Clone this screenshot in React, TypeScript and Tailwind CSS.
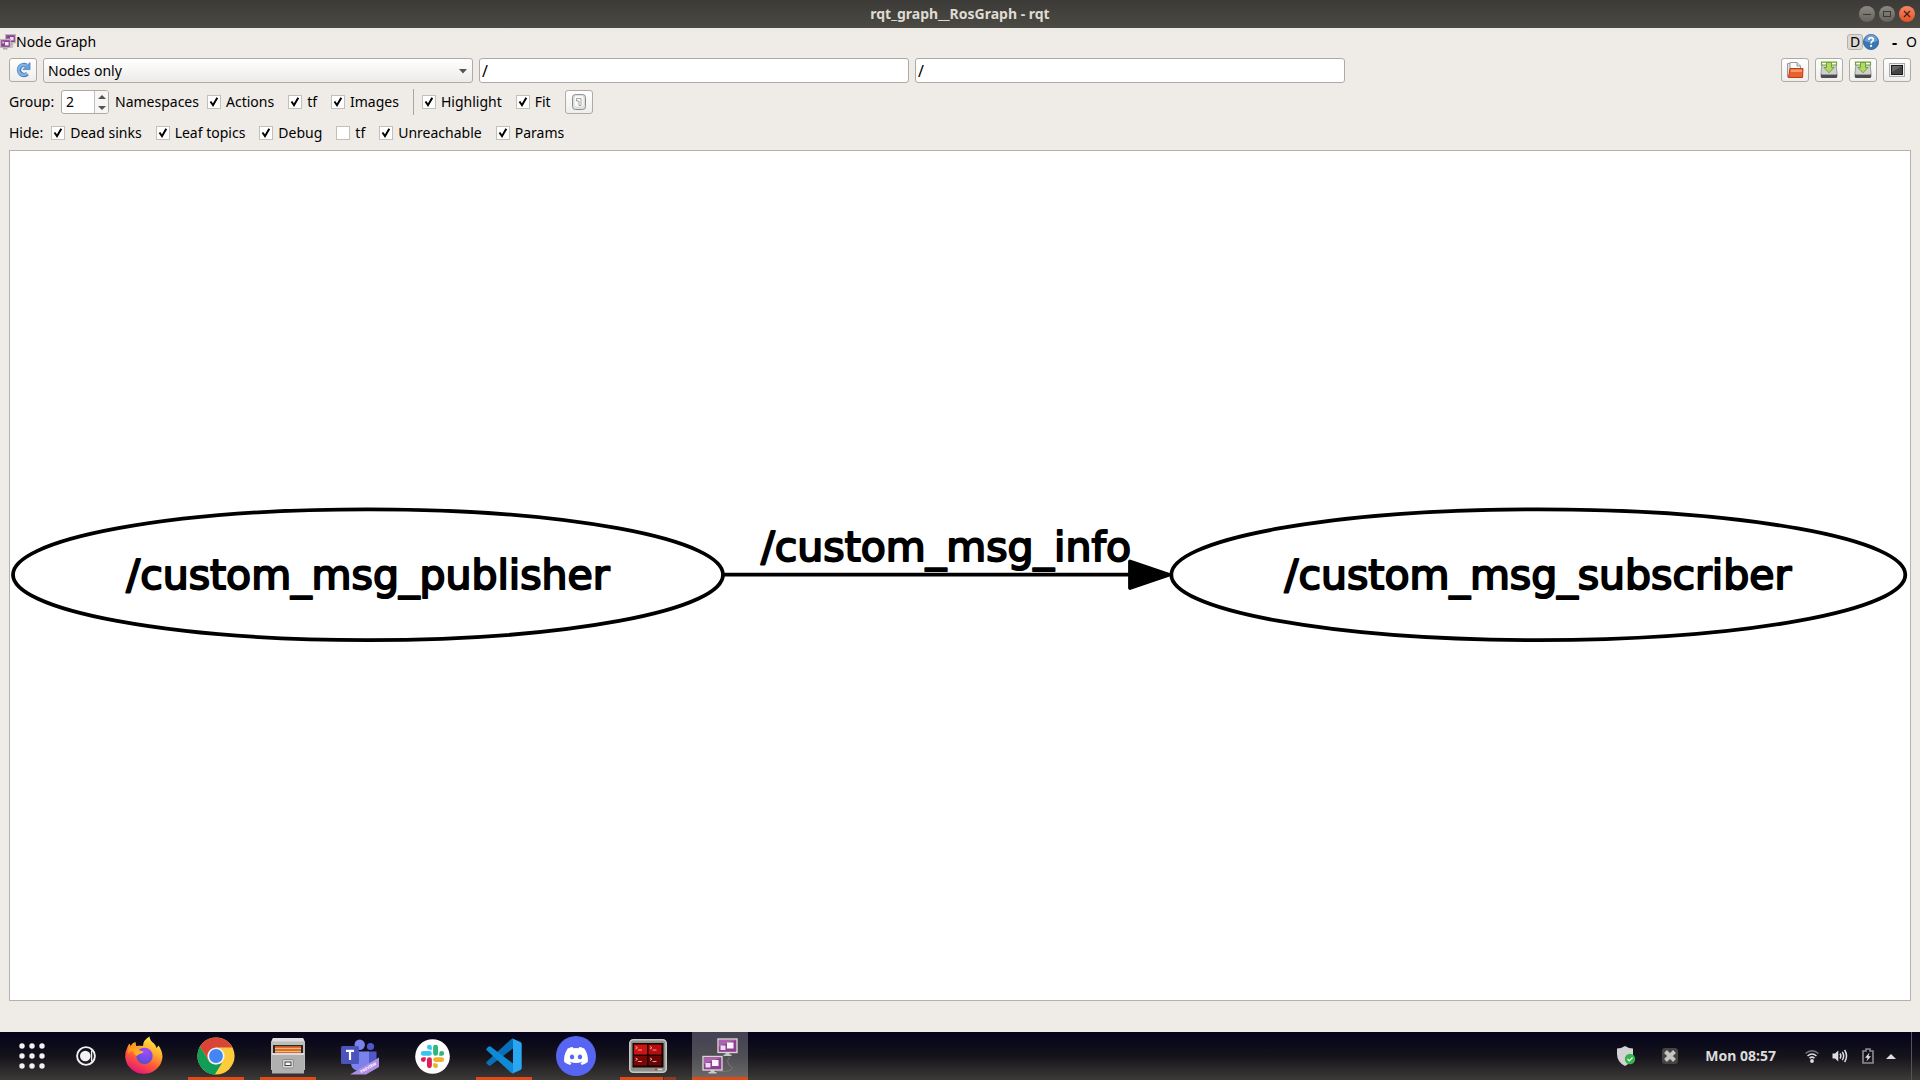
import type { ReactNode } from "react";
import { FaDiscord } from "react-icons/fa";

function Check({ label, checked = true }: { label: string; checked?: boolean }) {
  return (
    <label className="flex items-center gap-[5px]">
      <span className="grid size-3.5 place-items-center">
        <input
          type="checkbox"
          defaultChecked={checked}
          className="peer col-start-1 row-start-1 size-3.5 appearance-none border border-[#c3bfbb] bg-white"
        />
        <svg
          viewBox="0 0 14 14"
          className="pointer-events-none invisible col-start-1 row-start-1 size-3.5 peer-checked:visible"
          fill="none"
          stroke="#000"
          strokeWidth="2"
        >
          <path d="M3.5 6.5 L6 10.2 L10.3 2.8" />
        </svg>
      </span>
      <span>{label}</span>
    </label>
  );
}

function ToolButton({ label, children }: { label: string; children: ReactNode }) {
  return (
    <button
      type="button"
      aria-label={label}
      className="flex h-6 w-7 shrink-0 items-center justify-center rounded-[3px] border border-[#aeaaa6] bg-linear-to-b from-white to-[#efeeec]"
    >
      {children}
    </button>
  );
}

function FilterInput({ label }: { label: string }) {
  return (
    <div className="flex-1">
      <input
        type="text"
        aria-label={label}
        defaultValue="/"
        className="block h-[25px] w-full rounded-[3px] border border-[#aeaaa6] bg-white px-0.5 text-base"
      />
    </div>
  );
}

function RefreshIcon() {
  return (
    <svg viewBox="0 0 18 18" className="size-[18px]">
      <path d="M13.4 12.6 A5 5 0 1 1 12.4 4.6" fill="none" stroke="#4a83c0" strokeWidth="4.4" />
      <path d="M16 1.6 V8.6 H8.8 Z" fill="#6a9fd6" stroke="#4a83c0" strokeWidth="0.8" />
      <path d="M13 12.3 A4.9 4.9 0 1 1 12.4 5" fill="none" stroke="#86b3e2" strokeWidth="2.4" />
    </svg>
  );
}

function OpenIcon() {
  return (
    <svg viewBox="0 0 18 18" className="size-[18px]">
      <path d="M1.5 2.5 H8 L10 4.5 V16 H1.5 Z" fill="#e4e2e0" stroke="#999" />
      <path d="M4 1.5 H11 L14.5 5 V12 H4 Z" fill="#fafafa" stroke="#999" />
      <path d="M11 1.5 V5 H14.5" fill="#ddd" stroke="#999" />
      <path d="M4 7.5 H17 L16.5 16.5 H2.5 Z" fill="#e8622c" stroke="#c03a14" />
      <path d="M4.8 8.5 H16 V11 H4.5 Z" fill="#f59a6c" />
    </svg>
  );
}

function SaveIcon() {
  return (
    <svg viewBox="0 0 18 18" className="size-[18px]">
      <path d="M2 3 H16 L17 12 V16 H1 V12 Z" fill="#cfcfcf" stroke="#9a9a9a" />
      <path d="M1 13 H17 V16 Q17 17 16 17 H2 Q1 17 1 16 Z" fill="#4c4c4c" />
      <path d="M1.5 13.5 H16.5" stroke="#999" />
      <path d="M1.5 1.2 H16.5 V4 H1.5 Z" fill="#fff" stroke="#6fa32e" strokeWidth="1.2" />
      <path d="M6.5 1.5 H11.5 V6.5 H14 L9 11.8 L4 6.5 H6.5 Z" fill="#b3d86a" stroke="#6fa32e" />
    </svg>
  );
}

function ScreenIcon() {
  return (
    <svg viewBox="0 0 18 16" className="h-4 w-[18px]">
      <rect x="1.5" y="1.5" width="15" height="13" fill="#eee" stroke="#aaa" />
      <rect x="3.5" y="3.5" width="11" height="9" fill="#444" stroke="#1c1c1c" />
      <path d="M4 4 H14 L4 10 Z" fill="#666" />
    </svg>
  );
}

function FitIcon() {
  return (
    <svg viewBox="0 0 18 18" className="size-[18px]">
      <rect x="2.5" y="1.5" width="13" height="15" rx="3" fill="#e4e3e1" stroke="#8b8b8b" />
      <rect x="4" y="2.2" width="10" height="12" rx="2.5" fill="#f8f8f7" stroke="#c9c9c9" strokeWidth="0.6" />
      <path d="M6.5 5.5 H11 V12.5 H9 V8 H6.5 Z" fill="#fff" stroke="#999" strokeWidth="0.9" />
    </svg>
  );
}

function Monitor({ x, y }: { x: number; y: number }) {
  return (
    <g transform={`translate(${x} ${y})`}>
      <path d="M8 13 H12 V16 H14 V17.5 H6 V16 H8 Z" fill="#c9c9c9" />
      <rect x="0.5" y="0.5" width="19" height="13.5" fill="#8e3f93" stroke="#d5d5d2" strokeWidth="1.4" />
      <path d="M1.5 1.5 H18.5 L1.5 8 Z" fill="#a964ad" />
      <rect x="3" y="7" width="5" height="4.5" fill="#eadcf0" />
      <rect x="9.5" y="4" width="6.5" height="6" fill="#fbf7fc" />
    </g>
  );
}

function NodesIcon() {
  return (
    <svg viewBox="0 0 36 36" className="size-9">
      <path d="M28 19 Q24 22 27 27 Q34 31 26 33 Q20 34 14 33" fill="none" stroke="#777" strokeWidth="1" />
      <Monitor x={15.5} y={0.5} />
      <Monitor x={0.5} y={18} />
    </svg>
  );
}

function NodesIconSmall() {
  return (
    <svg viewBox="0 0 16 16" className="size-4">
      <path d="M12 8 V12.5 H8" fill="none" stroke="#c4c1bd" strokeWidth="2.5" />
      <path d="M8.5 9.5 H12.5 V11 H8.5 Z M3 13.5 H7.5 V15.5 H3 Z" fill="#a9a6a3" />
      <rect x="5.6" y="0.6" width="9.8" height="8" fill="#8e3f93" stroke="#b9b6b3" strokeWidth="1.2" />
      <rect x="10" y="3" width="3.6" height="3.4" fill="#eadcf0" />
      <rect x="7.2" y="4.5" width="2" height="2" fill="#d9b9dc" />
      <rect x="0.6" y="5.6" width="9.8" height="7.8" fill="#8e3f93" stroke="#b9b6b3" strokeWidth="1.2" />
      <rect x="5" y="8" width="3.6" height="3.4" fill="#f3e9f5" />
      <rect x="2.2" y="7.5" width="2" height="2" fill="#d9b9dc" />
    </svg>
  );
}

function Graph() {
  return (
    <svg viewBox="0 0 1900 849" className="size-full" role="img" aria-label="Node graph">
      <g fill="none" stroke="#000" strokeWidth="3.8">
        <ellipse cx="358" cy="423.7" rx="355" ry="65.4" />
        <ellipse cx="1528.3" cy="423.7" rx="367" ry="65.4" />
        <path d="M714 423.7 H1120" />
        <path d="M1120 410.5 L1159 423.7 L1120 437 Z" fill="#000" strokeLinejoin="round" />
      </g>
      <g
        className="font-['DejaVu_Sans',sans-serif] text-[41px]"
        textAnchor="middle"
        fill="#000"
        stroke="#000"
        strokeWidth="2"
        strokeLinejoin="round"
      >
        <text x="358" y="438">/custom_msg_publisher</text>
        <text x="936" y="410">/custom_msg_info</text>
        <text x="1528" y="438">/custom_msg_subscriber</text>
      </g>
    </svg>
  );
}

function Launcher({
  label,
  running = false,
  active = false,
  children,
}: {
  label: string;
  running?: boolean;
  active?: boolean;
  children: ReactNode;
}) {
  return (
    <button
      type="button"
      aria-label={label}
      className={
        active
          ? "relative flex h-12 w-14 items-center justify-center bg-white/25"
          : "relative flex h-12 w-14 items-center justify-center"
      }
    >
      {children}
      {running && <span className="absolute inset-x-0 bottom-0 h-[3px] bg-[#df4a16]" />}
    </button>
  );
}

function Firefox() {
  return (
    <svg viewBox="0 0 40 40" className="size-10">
      <defs>
        <linearGradient id="ffBody" x1="0.8" y1="0" x2="0.3" y2="1">
          <stop offset="0" stopColor="#fff44f" />
          <stop offset="0.35" stopColor="#ffb02e" />
          <stop offset="0.65" stopColor="#ff5a36" />
          <stop offset="1" stopColor="#e3117f" />
        </linearGradient>
        <linearGradient id="ffHead" x1="0" y1="0" x2="1" y2="1">
          <stop offset="0" stopColor="#ff8a16" />
          <stop offset="1" stopColor="#ffc02e" />
        </linearGradient>
        <radialGradient id="ffCore" cx="0.6" cy="0.2" r="0.9">
          <stop offset="0" stopColor="#a24bff" />
          <stop offset="1" stopColor="#4a4fd0" />
        </radialGradient>
      </defs>
      <path
        d="M3.5 11 Q4.5 8 5.5 7.5 L6.5 10 Q8.5 6.5 11.5 6 Q11 8.5 12 10 Q16 9.5 19 10 Q19 4 25.5 0.5 Q26 4.5 29.5 7 Q32 9 32.5 12 L34.5 9.5 Q38.5 15 38.5 21 A18.7 18.2 0 0 1 1.2 21 Q1 15.5 3.5 11 Z"
        fill="url(#ffBody)"
      />
      <circle cx="20.5" cy="20" r="8.2" fill="url(#ffCore)" />
      <path
        d="M5 11 L7 11 Q9 7.5 11.5 6.5 Q11.5 9.5 13.5 12.5 Q15 15 19.5 15.3 Q19 17.5 15.5 18 Q13.5 18.3 13 20 Q9.5 18 9 14.5 Q5.5 15 4 18 Z"
        fill="url(#ffHead)"
      />
    </svg>
  );
}

function Chrome() {
  return (
    <svg viewBox="0 0 38 38" className="size-[38px]">
      <circle cx="19" cy="19" r="18.6" fill="#fdcc3c" />
      <path d="M19 0.4 A18.6 18.6 0 0 1 35.4 10.5 H19 L11.5 23.5 L3 9.5 A18.6 18.6 0 0 1 19 0.4" fill="#da4436" />
      <path d="M3 9.6 L11.5 23.5 Q14 27.6 19 27.6 L25 26 L17.8 37.6 A18.6 18.6 0 0 1 3 9.6 Z" fill="#109d58" />
      <circle cx="19" cy="19" r="8.6" fill="#f1f1f1" />
      <circle cx="19" cy="19" r="6.9" fill="#4285f4" />
    </svg>
  );
}

function Files() {
  return (
    <svg viewBox="0 0 36 38" className="h-[38px] w-9">
      <path d="M3 1 H33 L35 5 V33 H1 V5 Z" fill="#bdbdbd" />
      <path d="M3 1 H33 L34.5 4.5 H1.5 Z" fill="#dedede" />
      <rect x="3" y="8" width="30" height="9" fill="#2c2a28" />
      <path d="M5 9 H31 V16 H5 Z" fill="#c7581f" />
      <path d="M5 11.5 H31 M5 14.5 H31" stroke="#f7b676" strokeWidth="1.4" />
      <path d="M2 16 H34 V36.5 H2 Z" fill="#b0b0b0" />
      <path d="M2 16 H34 V18 H2 Z" fill="#dcdcdc" />
      <rect x="12.5" y="22.5" width="11" height="8.5" rx="1.5" fill="#d8d8d8" stroke="#8e8e8e" strokeWidth="1" />
      <rect x="15" y="25" width="6" height="3.5" fill="#f5f5f5" stroke="#444" strokeWidth="1" />
    </svg>
  );
}

function Teams() {
  return (
    <svg viewBox="0 0 38 38" className="size-[38px]">
      <circle cx="29.5" cy="9.5" r="3.6" fill="#5059c9" />
      <path d="M26 14.5 H35.5 V25 Q35 29 30 29 H26 Z" fill="#5059c9" />
      <circle cx="18.7" cy="7.8" r="5.2" fill="#7b83eb" />
      <path d="M10 14.5 H28 V27 Q27 34 19 34 Q11 34 10 27 Z" fill="#7b83eb" />
      <rect x="0" y="9" width="18" height="18" rx="1.5" fill="#4b53bc" />
      <path d="M5 13.8 H13 M9 13.8 V23" stroke="#fff" strokeWidth="2.2" fill="none" />
      <path d="M9 37.5 L38 20.5 V30 L25 37.5 Z" fill="#b08ee6" />
      <text
        x="27.5"
        y="32"
        transform="rotate(-30 27.5 31)"
        textAnchor="middle"
        fill="#fff"
        className="font-['Noto_Sans',sans-serif] text-[4px] font-bold"
      >
        PREVIEW
      </text>
    </svg>
  );
}

function Slack() {
  return (
    <svg viewBox="-6 -6 36 36" className="size-[35px]">
      <circle cx="12" cy="12" r="17.8" fill="#fff" />
      <path
        fill="#e01e5a"
        d="M5.042 15.165a2.528 2.528 0 0 1-2.52 2.523A2.528 2.528 0 0 1 0 15.165a2.527 2.527 0 0 1 2.522-2.52h2.52v2.52zM6.313 15.165a2.527 2.527 0 0 1 2.521-2.52 2.527 2.527 0 0 1 2.521 2.52v6.313A2.528 2.528 0 0 1 8.834 24a2.528 2.528 0 0 1-2.521-2.522v-6.313z"
      />
      <path
        fill="#36c5f0"
        d="M8.834 5.042a2.528 2.528 0 0 1-2.521-2.52A2.528 2.528 0 0 1 8.834 0a2.528 2.528 0 0 1 2.521 2.522v2.52H8.834zM8.834 6.313a2.528 2.528 0 0 1 2.521 2.521 2.528 2.528 0 0 1-2.521 2.521H2.522A2.528 2.528 0 0 1 0 8.834a2.528 2.528 0 0 1 2.522-2.521h6.312z"
      />
      <path
        fill="#2eb67d"
        d="M18.956 8.834a2.528 2.528 0 0 1 2.522-2.521A2.528 2.528 0 0 1 24 8.834a2.528 2.528 0 0 1-2.522 2.521h-2.522V8.834zM17.688 8.834a2.528 2.528 0 0 1-2.523 2.521 2.527 2.527 0 0 1-2.52-2.521V2.522A2.527 2.527 0 0 1 15.165 0a2.528 2.528 0 0 1 2.523 2.522v6.312z"
      />
      <path
        fill="#ecb22e"
        d="M15.165 18.956a2.528 2.528 0 0 1 2.523 2.522A2.528 2.528 0 0 1 15.165 24a2.527 2.527 0 0 1-2.52-2.522v-2.522h2.52zM15.165 17.688a2.527 2.527 0 0 1-2.52-2.523 2.526 2.526 0 0 1 2.52-2.52h6.313A2.527 2.527 0 0 1 24 15.165a2.528 2.528 0 0 1-2.522 2.523h-6.313z"
      />
    </svg>
  );
}

function VsCode() {
  return (
    <svg viewBox="0 0 36 36" className="size-9">
      <path d="M27 0.8 V10.5 L4.5 27.5 Q3.5 28 2.7 27.4 L0.6 25.4 Q0 24.5 0.7 23.7 L25 1.3 Z" fill="#0b6fb8" />
      <path d="M27 35.2 V25.5 L4.5 8.5 Q3.5 8 2.7 8.6 L0.6 10.6 Q0 11.5 0.7 12.3 L25 34.7 Z" fill="#1089d6" />
      <path d="M26 0.3 L34.5 4 Q35.7 4.8 35.7 6 V30 Q35.7 31.2 34.5 32 L26 35.7 Q27 35 27 33 V3 Q27 1 26 0.3 Z" fill="#2aa7f2" />
    </svg>
  );
}

function Terminator() {
  return (
    <svg viewBox="0 0 38 34" className="h-[34px] w-[38px]">
      <rect x="0.8" y="0.8" width="36.4" height="32.4" rx="3.5" fill="#8f918c" stroke="#c6c8c3" strokeWidth="1.6" />
      <rect x="3.5" y="4" width="31" height="24.5" fill="#190303" />
      <rect x="5" y="5.5" width="13" height="10" fill="#cf1313" />
      <rect x="19.5" y="5.5" width="13" height="10" fill="#b80d0d" />
      <rect x="5" y="17" width="13" height="9.5" fill="#7c0606" />
      <rect x="19.5" y="17" width="13" height="9.5" fill="#6a0505" />
      <path
        d="M6.5 7.5 L8.5 8.7 L6.5 10 M9 11 H13 M21 7.5 L23 8.7 L21 10 M23.5 11 H27.5 M6.5 19 L8.5 20.2 L6.5 21.5 M9 22.5 H13 M21 19 L23 20.2 L21 21.5 M23.5 22.5 H27.5"
        fill="none"
        stroke="#f0b5b5"
        strokeWidth="0.9"
      />
      <rect x="26" y="29.7" width="2" height="1.6" fill="#e02020" />
      <rect x="29" y="29.9" width="4" height="1.2" fill="#dcdcdc" />
    </svg>
  );
}

export default function App() {
  return (
    <div className="flex h-screen flex-col bg-[#efebe7] font-['Noto_Sans',sans-serif] text-sm leading-5 text-black">
      <header className="grid h-7 shrink-0 grid-cols-3 items-center bg-linear-to-b from-[#3b3a36] to-[#4b4a44]">
        <h1 className="col-start-2 text-center text-sm font-bold text-[#dfdbd2]">
          rqt_graph__RosGraph - rqt
        </h1>
        <div className="flex justify-end gap-1 pr-[5px]">
          <button
            type="button"
            aria-label="Minimize"
            className="flex size-4 items-center justify-center rounded-full bg-linear-to-b from-[#8b8982] to-[#65635c]"
          >
            <svg viewBox="0 0 8 8" className="size-2" stroke="#3a3934">
              <path d="M0 4.5 H8" />
            </svg>
          </button>
          <button
            type="button"
            aria-label="Maximize"
            className="flex size-4 items-center justify-center rounded-full bg-linear-to-b from-[#8b8982] to-[#65635c]"
          >
            <svg viewBox="0 0 8 8" className="size-2" stroke="#3a3934" fill="none">
              <rect x="0.5" y="1.5" width="7" height="5" />
            </svg>
          </button>
          <button
            type="button"
            aria-label="Close"
            className="flex size-4 items-center justify-center rounded-full bg-linear-to-b from-[#f58763] to-[#e3501f]"
          >
            <svg viewBox="0 0 8 8" className="size-2" stroke="#4a2013" strokeWidth="1.3">
              <path d="M1 1 L7 7 M7 1 L1 7" />
            </svg>
          </button>
        </div>
      </header>

      <main className="flex min-h-0 flex-1 flex-col">
        <div className="flex h-[30px] shrink-0 items-center justify-between pr-[3px] pb-[3px]">
          <h2 className="flex items-center">
            <NodesIconSmall />
            Node Graph
          </h2>
          <div className="flex items-center">
            <button
              type="button"
              className="flex size-4 items-center justify-center rounded-[3px] border border-[#b5b1ad] bg-[#dcd8d4]"
            >
              D
            </button>
            <button type="button" aria-label="Help">
              <svg viewBox="0 0 16 16" className="size-4">
                <circle cx="8" cy="8" r="7.6" fill="#3b76b3" stroke="#2b5f96" strokeWidth="0.8" />
                <path d="M1.5 7 A6.5 6.5 0 0 1 14.5 7 Q8 9.5 1.5 7" fill="#6a9dd0" />
                <path
                  d="M5.7 6 Q5.8 3.6 8.1 3.6 Q10.3 3.7 10.3 5.7 Q10.3 6.8 9 7.6 Q8.1 8.2 8.1 9.6"
                  fill="none"
                  stroke="#fff"
                  strokeWidth="1.6"
                />
                <circle cx="8.1" cy="11.9" r="1.1" fill="#fff" />
              </svg>
            </button>
            <button type="button" className="ml-3 w-[7px] text-base font-bold">
              -
            </button>
            <button type="button" className="ml-2">
              O
            </button>
          </div>
        </div>

        <div className="flex shrink-0 gap-1.5 px-[9px]">
          <ToolButton label="Refresh">
            <RefreshIcon />
          </ToolButton>
          <div className="relative flex-1">
            <select
              aria-label="Graph type"
              className="block h-[25px] w-full appearance-none rounded-[3px] border border-[#aeaaa6] bg-linear-to-b from-white to-[#edebe9] pl-1"
            >
              <option>Nodes only</option>
            </select>
            <svg viewBox="0 0 8 5" className="pointer-events-none absolute top-[11px] right-1.5 h-[5px] w-2">
              <path d="M0 0 H8 L4 4.5 Z" fill="#55534f" />
            </svg>
          </div>
          <FilterInput label="Namespace filter" />
          <FilterInput label="Topic filter" />
          <div className="-mr-1.5 flex-1" />
          <ToolButton label="Load graph">
            <OpenIcon />
          </ToolButton>
          <ToolButton label="Save as DOT">
            <SaveIcon />
          </ToolButton>
          <ToolButton label="Save as SVG">
            <SaveIcon />
          </ToolButton>
          <ToolButton label="Save as image">
            <ScreenIcon />
          </ToolButton>
        </div>

        <div className="mt-[7px] flex h-6 shrink-0 items-center gap-3.5 px-[9px]">
          <div className="flex items-center gap-1.5">
            <label htmlFor="group" className="w-[46px]">
              Group:
            </label>
            <div className="flex h-6 w-12 overflow-hidden rounded-[3px] border border-[#aeaaa6] bg-white">
              <input
                id="group"
                type="number"
                defaultValue={2}
                className="w-8 min-w-0 appearance-none pl-1 [appearance:textfield] [&::-webkit-inner-spin-button]:appearance-none"
              />
              <div className="flex w-3.5 flex-col border-l border-[#c3bfbb] bg-[#f7f6f5]">
                <button type="button" aria-label="Increase" className="flex flex-1 items-center justify-center">
                  <svg viewBox="0 0 8 4" className="h-1 w-2">
                    <path d="M4 0 L8 4 H0 Z" fill="#55534f" />
                  </svg>
                </button>
                <button type="button" aria-label="Decrease" className="flex flex-1 items-center justify-center">
                  <svg viewBox="0 0 8 4" className="h-1 w-2">
                    <path d="M0 0 H8 L4 4 Z" fill="#55534f" />
                  </svg>
                </button>
              </div>
            </div>
            <span className="mr-0.5">Namespaces</span>
            <Check label="Actions" />
          </div>
          <Check label="tf" />
          <Check label="Images" />
          <div className="flex items-center gap-2">
            <div className="h-[26px] w-px bg-[#aaa6a2]" />
            <Check label="Highlight" />
          </div>
          <Check label="Fit" />
          <ToolButton label="Fit in view">
            <FitIcon />
          </ToolButton>
        </div>

        <div className="mt-[9px] mb-[7px] flex h-5 shrink-0 items-center gap-3.5 px-[9px]">
          <div className="flex items-center gap-2">
            <span>Hide:</span>
            <Check label="Dead sinks" />
          </div>
          <Check label="Leaf topics" />
          <Check label="Debug" />
          <Check label="tf" checked={false} />
          <Check label="Unreachable" />
          <Check label="Params" />
        </div>

        <section className="mx-[9px] mb-[31px] min-h-0 flex-1 border border-[#b5b2ae] bg-white">
          <Graph />
        </section>
      </main>

      <footer className="flex h-12 shrink-0 justify-between bg-linear-to-b from-[#05031a] via-[#15131b] to-[#3d3b37]">
        <nav className="flex gap-4">
          <button type="button" aria-label="Show applications" className="flex h-12 w-16 items-center justify-center">
            <svg viewBox="0 0 28 28" className="size-7" fill="#f2f2f2">
              {[4, 14, 24].map((y) => [4, 14, 24].map((x) => <circle key={x + "-" + y} cx={x} cy={y} r="2.7" />))}
            </svg>
          </button>
          <button type="button" aria-label="Assistant" className="-ml-2 flex h-12 w-7 items-center justify-center">
            <svg viewBox="0 0 20 20" className="size-5">
              <circle cx="10" cy="10" r="8.9" fill="none" stroke="#f2f2f2" strokeWidth="1.9" />
              <circle cx="9.3" cy="10" r="5.3" fill="#f2f2f2" />
              <path d="M15.6 4.5 V15.5" stroke="#f2f2f2" strokeWidth="1.3" />
            </svg>
          </button>
          <Launcher label="Firefox">
            <Firefox />
          </Launcher>
          <Launcher label="Chrome" running>
            <Chrome />
          </Launcher>
          <Launcher label="Files" running>
            <Files />
          </Launcher>
          <Launcher label="Teams">
            <Teams />
          </Launcher>
          <Launcher label="Slack">
            <Slack />
          </Launcher>
          <Launcher label="Visual Studio Code" running>
            <VsCode />
          </Launcher>
          <Launcher label="Discord">
            <span className="flex size-10 items-center justify-center rounded-full bg-[#5865f2]">
              <FaDiscord className="size-[26px] text-white" />
            </span>
          </Launcher>
          <Launcher label="Terminator">
            <Terminator />
            <span className="absolute inset-x-0 bottom-0 flex h-[3px] gap-px">
              <span className="flex-1 bg-[#df4a16]" />
              <span className="w-3 bg-[#8a3b22]" />
            </span>
          </Launcher>
          <Launcher label="rqt" running active>
            <NodesIcon />
          </Launcher>
        </nav>

        <div className="flex items-center">
          <svg viewBox="0 0 20 22" className="h-[22px] w-5" aria-label="Security">
            <path d="M9 1 Q13 3.5 17 3.5 V9 Q17 17 9 21 Q1 17 1 9 V3.5 Q5 3.5 9 1 Z" fill="#d3d3d3" />
            <circle cx="14" cy="14" r="5.2" fill="#33b54a" />
            <path d="M11.5 14 L13.3 15.8 L16.5 12.5" fill="none" stroke="#fff" strokeWidth="1.2" />
          </svg>
          <svg viewBox="0 0 16 16" className="ml-[26px] size-4" aria-label="Close indicator">
            <rect width="16" height="16" rx="3" fill="#454441" />
            <path d="M3.5 3.5 L12.5 12.5 M12.5 3.5 L3.5 12.5" stroke="#c4c4c4" strokeWidth="4" />
          </svg>
          <time className="ml-[27px] text-sm font-bold text-[#dcdcdc]">Mon 08:57</time>
          <svg viewBox="0 0 14 14" className="ml-[29px] size-3.5" aria-label="Wi-Fi" fill="none" strokeWidth="1.5">
            <path d="M0.5 4.5 Q7 -1 13.5 4.5" stroke="#77757a" />
            <path d="M2.5 7 Q7 3 11.5 7" stroke="#dedede" />
            <path d="M4.5 9.3 Q7 7 9.5 9.3" stroke="#dedede" />
            <circle cx="7" cy="12" r="1.9" fill="#dedede" />
          </svg>
          <svg viewBox="0 0 16 14" className="ml-[13px] h-3.5 w-4" aria-label="Volume" fill="none" stroke="#dedede" strokeWidth="1.5">
            <path d="M0.5 4.5 H3 L6.3 1.5 V12.5 L3 9.5 H0.5 Z" fill="#dedede" stroke="none" />
            <path d="M8 4.5 Q9.8 7 8 9.5 M10.3 2.8 Q13 7 10.3 11.2" />
            <path d="M12.6 1 Q16.5 7 12.6 13" />
          </svg>
          <svg viewBox="0 0 12 16" className="ml-3.5 h-4 w-3" aria-label="Battery">
            <path d="M1 3 H4 V1 H8 V3 H11 V15 H1 Z" fill="none" stroke="#8f8d92" strokeWidth="1.6" />
            <path d="M7.5 4.5 L3 9.8 H5.6 L4.5 13.3 L9 8.2 H6.4 Z" fill="#e8e8e8" />
          </svg>
          <svg viewBox="0 0 10 5" className="ml-3 h-[5px] w-2.5" aria-label="System menu">
            <path d="M5 0 L10 5 H0 Z" fill="#dedede" />
          </svg>
          <div className="mr-2 ml-[15px] h-12 w-px bg-[#55535a]" />
        </div>
      </footer>
    </div>
  );
}
